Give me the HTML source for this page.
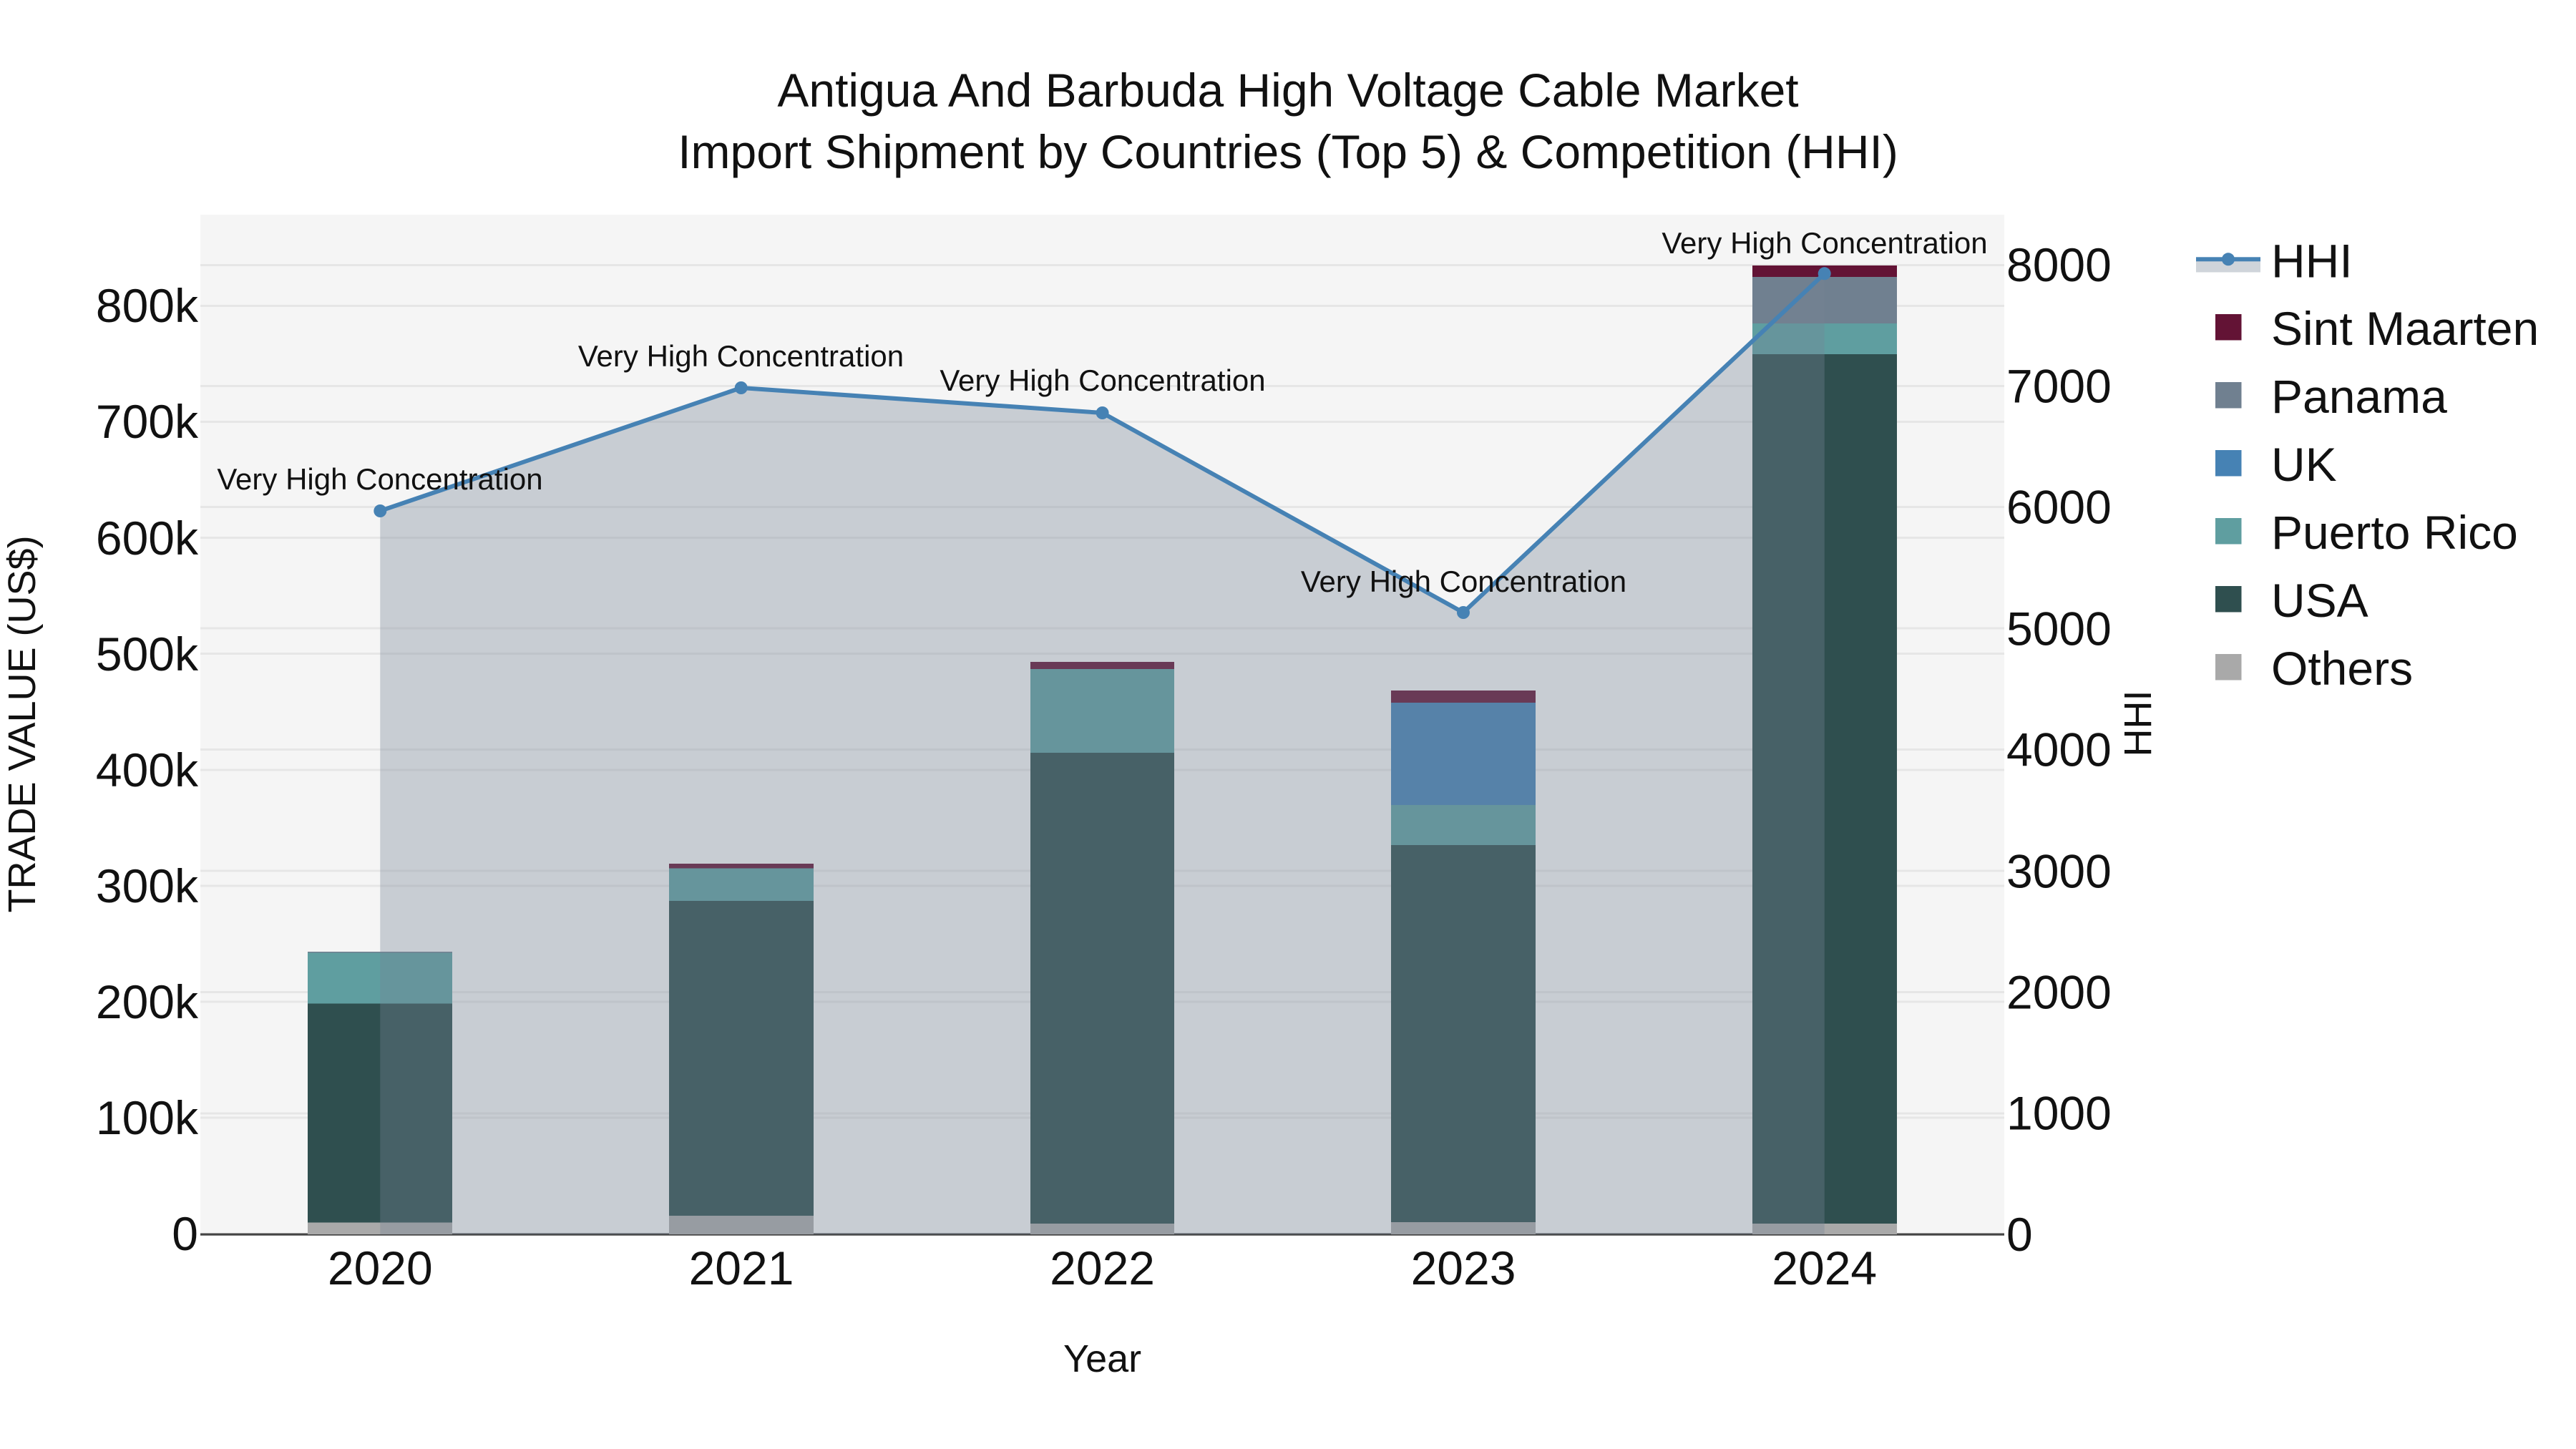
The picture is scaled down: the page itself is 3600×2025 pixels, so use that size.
<!DOCTYPE html>
<html>
<head>
<meta charset="utf-8">
<style>
html,body{margin:0;padding:0;background:#fff;width:3600px;height:2025px;overflow:hidden}
svg{display:block}
text{font-family:"Liberation Sans",Arial,sans-serif;fill:#111}
.t{font-size:66px}
.a{font-size:42px;text-anchor:middle}
.ttl{font-size:66px;text-anchor:middle}
.ax{font-size:54px;text-anchor:middle}
.g{stroke:#e6e6e6;stroke-width:3;fill:none}
</style>
</head>
<body>
<svg width="3600" height="2025" viewBox="0 0 3600 2025" xmlns="http://www.w3.org/2000/svg">
<rect width="3600" height="2025" fill="#fff"/>
<rect x="280" y="300" width="2521" height="1425" fill="#f5f5f5"/>
<!-- gridlines left -->
<g class="g">
<path d="M280 1562H2801M280 1400H2801M280 1238H2801M280 1076H2801M280 913.5H2801M280 751.5H2801M280 589.5H2801M280 427.5H2801"/>
<path d="M280 1556H2801M280 1386.5H2801M280 1217H2801M280 1047.5H2801M280 878H2801M280 708.5H2801M280 539.5H2801M280 370.5H2801"/>
</g>
<rect x="280" y="1723.5" width="2521" height="3.2" fill="#444"/>
<!-- bars -->
<g shape-rendering="crispEdges">
<rect x="430" y="1708.4" width="202" height="16.6" fill="#a9a9a9"/>
<rect x="430" y="1402.7" width="202" height="305.7" fill="#2f4f4f"/>
<rect x="430" y="1331.7" width="202" height="71" fill="#5f9ea0"/>
<rect x="430" y="1330" width="202" height="1.7" fill="#708090"/>

<rect x="935" y="1699" width="202" height="26" fill="#a9a9a9"/>
<rect x="935" y="1259" width="202" height="440" fill="#2f4f4f"/>
<rect x="935" y="1213.3" width="202" height="45.7" fill="#5f9ea0"/>
<rect x="935" y="1207" width="202" height="6.3" fill="#631335"/>

<rect x="1440" y="1710" width="201" height="15" fill="#a9a9a9"/>
<rect x="1440" y="1052" width="201" height="658" fill="#2f4f4f"/>
<rect x="1440" y="935" width="201" height="117" fill="#5f9ea0"/>
<rect x="1440" y="925" width="201" height="10" fill="#631335"/>

<rect x="1944" y="1708" width="202" height="17" fill="#a9a9a9"/>
<rect x="1944" y="1181" width="202" height="527" fill="#2f4f4f"/>
<rect x="1944" y="1125" width="202" height="56" fill="#5f9ea0"/>
<rect x="1944" y="982" width="202" height="143" fill="#4682b4"/>
<rect x="1944" y="965" width="202" height="17" fill="#631335"/>

<rect x="2449" y="1710" width="202" height="15" fill="#a9a9a9"/>
<rect x="2449" y="495" width="202" height="1215" fill="#2f4f4f"/>
<rect x="2449" y="452" width="202" height="43" fill="#5f9ea0"/>
<rect x="2449" y="387" width="202" height="65" fill="#708090"/>
<rect x="2449" y="371" width="202" height="16" fill="#631335"/>
</g>
<!-- area + line -->
<path d="M531.3 714L1035.7 542L1540.6 577L2045 856L2549.7 382.3V1725H531.3Z" fill="rgb(118,132,150)" fill-opacity="0.35"/>
<path d="M531.3 714L1035.7 542L1540.6 577L2045 856L2549.7 382.3" fill="none" stroke="#4682b4" stroke-width="6" stroke-linejoin="round"/>
<g fill="#4682b4">
<circle cx="531.3" cy="714" r="9"/>
<circle cx="1035.7" cy="542" r="9"/>
<circle cx="1540.6" cy="577" r="9"/>
<circle cx="2045" cy="856" r="9"/>
<circle cx="2549.7" cy="382.3" r="9"/>
</g>
<!-- annotations -->
<text class="a" x="531" y="684">Very High Concentration</text>
<text class="a" x="1035.5" y="512">Very High Concentration</text>
<text class="a" x="1541" y="546">Very High Concentration</text>
<text class="a" x="2045.5" y="827">Very High Concentration</text>
<text class="a" x="2550" y="354">Very High Concentration</text>
<!-- title -->
<text class="ttl" x="1800" y="149">Antigua And Barbuda High Voltage Cable Market</text>
<text class="ttl" x="1800" y="235">Import Shipment by Countries (Top 5) &amp; Competition (HHI)</text>
<!-- left ticks -->
<g class="t" text-anchor="end">
<text x="277" y="1747">0</text>
<text x="277" y="1585">100k</text>
<text x="277" y="1423">200k</text>
<text x="277" y="1261">300k</text>
<text x="277" y="1099">400k</text>
<text x="277" y="937">500k</text>
<text x="277" y="775">600k</text>
<text x="277" y="612">700k</text>
<text x="277" y="450">800k</text>
</g>
<!-- right ticks -->
<g class="t">
<text x="2804" y="1748">0</text>
<text x="2804" y="1578.5">1000</text>
<text x="2804" y="1409.5">2000</text>
<text x="2804" y="1240.5">3000</text>
<text x="2804" y="1070.5">4000</text>
<text x="2804" y="901.5">5000</text>
<text x="2804" y="731.5">6000</text>
<text x="2804" y="562.5">7000</text>
<text x="2804" y="393">8000</text>
</g>
<!-- x ticks -->
<g class="t" text-anchor="middle">
<text x="531.3" y="1795">2020</text>
<text x="1036" y="1795">2021</text>
<text x="1540.6" y="1795">2022</text>
<text x="2045" y="1795">2023</text>
<text x="2549.7" y="1795">2024</text>
</g>
<!-- axis titles -->
<text class="ax" x="1540.6" y="1917">Year</text>
<text class="ax" transform="translate(49,1012) rotate(-90)">TRADE VALUE (US$)</text>
<text class="ax" transform="translate(3006,1011) rotate(-90)">HHI</text>
<!-- legend -->
<rect x="3069" y="362" width="90" height="18.5" fill="rgb(118,132,150)" fill-opacity="0.35"/>
<rect x="3069" y="359.3" width="90" height="6" fill="#4682b4"/>
<circle cx="3114" cy="362.3" r="9" fill="#4682b4"/>
<g shape-rendering="crispEdges">
<rect x="3096" y="439" width="36.5" height="36.5" fill="#631335"/>
<rect x="3096" y="534" width="36.5" height="36.5" fill="#708090"/>
<rect x="3096" y="629" width="36.5" height="36.5" fill="#4682b4"/>
<rect x="3096" y="724" width="36.5" height="36.5" fill="#5f9ea0"/>
<rect x="3096" y="819" width="36.5" height="36.5" fill="#2f4f4f"/>
<rect x="3096" y="914" width="36.5" height="36.5" fill="#a9a9a9"/>
</g>
<g class="t">
<text x="3174" y="387.5">HHI</text>
<text x="3174" y="482">Sint Maarten</text>
<text x="3174" y="577">Panama</text>
<text x="3174" y="672">UK</text>
<text x="3174" y="767">Puerto Rico</text>
<text x="3174" y="862">USA</text>
<text x="3174" y="957">Others</text>
</g>
</svg>
</body>
</html>
